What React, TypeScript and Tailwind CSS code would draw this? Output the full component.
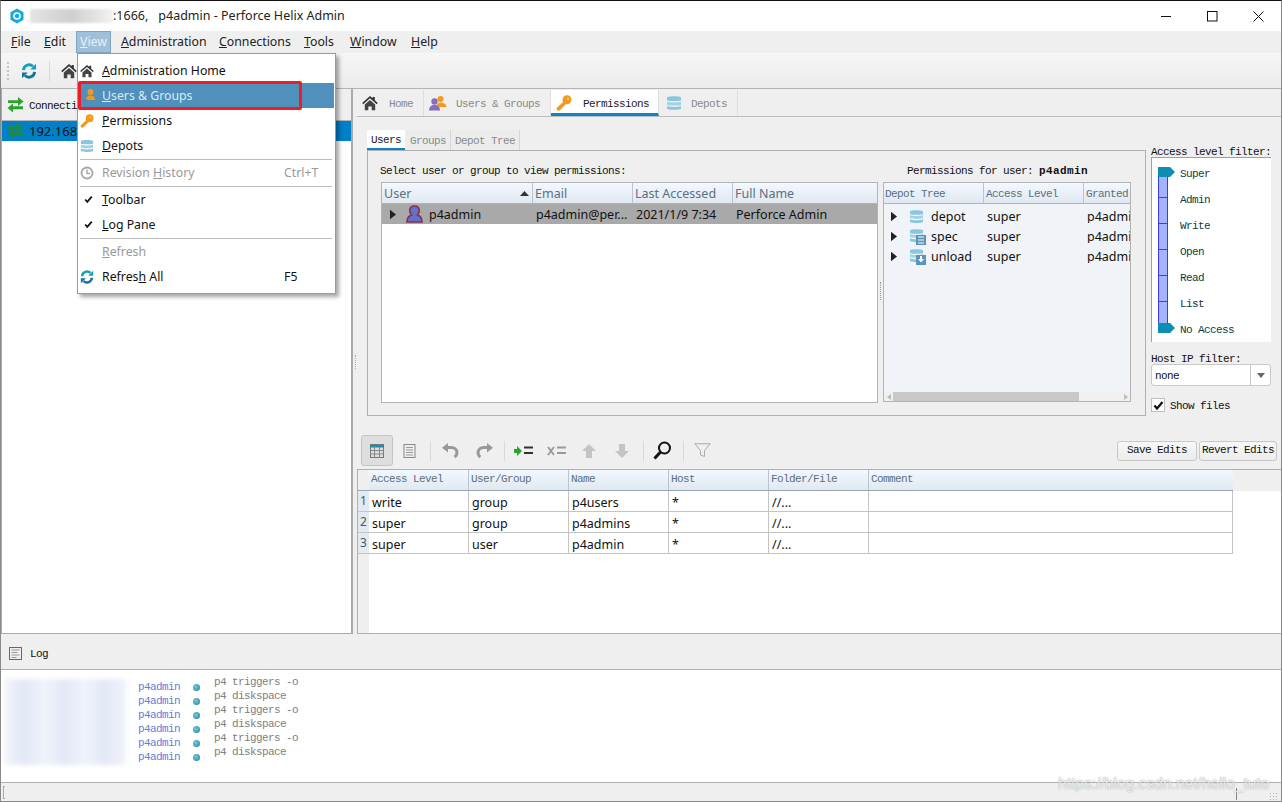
import React from "react";

const mono = "font-['Liberation_Mono',monospace] text-[11px] tracking-[-0.6px] whitespace-pre";

function Home({ s = 16 }: { s?: number }) {
  return (
    <svg width={s} height={s} viewBox="0 0 16 16" className="shrink-0">
      <path d="M8 1 0.2 8l1.100 1.200L8 3.300l6.700 5.900L15.800 8 12.800 5.300V2h-2.200v1.300z" fill="#333" />
      <path d="M2.800 9.600 8 5l5.200 4.600v5.600H9.700v-3.800H6.300v3.800H2.800z" fill="#444" />
    </svg>
  );
}
function Sync({ s = 16 }: { s?: number }) {
  return (
    <svg width={s} height={s} viewBox="0 0 16 16" className="shrink-0" fill="none">
      <path d="M2.400 7.200A5.700 5.700 0 0 1 12 3.400" stroke="#12a0b8" strokeWidth="2.800" />
      <path d="M15 .8v5.700H9.300z" fill="#12a0b8" />
      <path d="M13.600 8.800A5.700 5.700 0 0 1 4 12.600" stroke="#12749c" strokeWidth="2.800" />
      <path d="M1 15.200V9.500h5.700z" fill="#12749c" />
    </svg>
  );
}
function Arrows({ c = "#2aa52a" }: { c?: string }) {
  return (
    <svg width="17" height="16" viewBox="0 0 17 16" className="shrink-0">
      <path d="M1 3.200h10V0l5.500 4.500L11 9V5.900H1z" fill={c} />
      <path d="M16 9.200H6V6.500L.5 11 6 15.500v-3.200h10z" fill={c} />
    </svg>
  );
}
function Key({ s = 16 }: { s?: number }) {
  return (
    <svg width={s} height={s} viewBox="0 0 16 16" className="shrink-0">
      <circle cx="11" cy="4.800" r="4.500" fill="#f39a1c" />
      <path d="M8 6.200 .8 12.800 1 15.500h2.800L10 9z" fill="#f39a1c" />
      <circle cx="12" cy="3.800" r="1" fill="#fcd690" />
    </svg>
  );
}
function Users() {
  return (
    <svg width="18" height="16" viewBox="0 0 18 16" className="shrink-0">
      <circle cx="11.500" cy="4" r="3" fill="#f39a1c" />
      <path d="M7.500 12c0-3 1.500-4.500 4-4.500s6 1.500 6 4.500z" fill="#f39a1c" />
      <circle cx="5.500" cy="6.500" r="3.200" fill="#8a6db8" />
      <path d="M0 15.500c0-3.500 2-5.500 5.500-5.500s5.500 2 5.500 5.500z" fill="#8a6db8" />
    </svg>
  );
}
function MenuUser() {
  return (
    <svg width="13" height="13" viewBox="0 0 13 13" className="shrink-0 ml-[3px]">
      <circle cx="7.500" cy="3" r="3" fill="#f39a1c" />
      <path d="M3 11c0-3 1.500-4.500 4.500-4.500S12 8 12 11z" fill="#f39a1c" />
      <path d="M0 13c0-2 1-3 2.500-3S5 11 5 13z" fill="#7d72b0" />
    </svg>
  );
}
function Depot({ s = 16 }: { s?: number }) {
  return (
    <svg width={s} height={s} viewBox="0 0 16 16" className="shrink-0">
      <path d="M1 2.500C1 .8 15 .8 15 2.500V5C15 6.500 1 6.500 1 5z" fill="#8ac6de" />
      <path d="M1 6.400c3 1.400 11 1.400 14 0V9.400C15 11 1 11 1 9.400z" fill="#a2d2e6" />
      <path d="M1 10.900c3 1.400 11 1.400 14 0V13.500C15 15.300 1 15.300 1 13.500z" fill="#8ac6de" />
    </svg>
  );
}
function Clock() {
  return (
    <svg width="14" height="14" viewBox="0 0 14 14" fill="none" className="shrink-0">
      <circle cx="7" cy="7" r="5.500" stroke="#a8a8a8" strokeWidth="1.800" />
      <path d="M7 3.500V7.500H10" stroke="#a8a8a8" strokeWidth="1.400" />
    </svg>
  );
}
function Check({ s = 11 }: { s?: number }) {
  return (
    <svg width={s} height={s} viewBox="0 0 11 10" fill="none" className="shrink-0">
      <path d="M1.500 5 4 8l5.500-6.500" stroke="#111" strokeWidth="2.200" />
    </svg>
  );
}
function Tri() {
  return (
    <svg width="6" height="11" viewBox="0 0 7 11" className="shrink-0">
      <path d="M0 0l7 5.500L0 11z" fill="#222" />
    </svg>
  );
}
function Person() {
  return (
    <svg width="17" height="18" viewBox="0 0 17 18" className="shrink-0">
      <path d="M1 17c0-4 1.500-6 4.500-7-1-1-1.800-2.400-1.800-4.200C3.700 2.800 5.800 1 8.500 1s4.800 1.800 4.800 4.800c0 1.800-.8 3.200-1.800 4.200 3 1 4.500 3 4.500 7z" fill="#6272c8" stroke="#8a2c50" strokeWidth="1.600" />
    </svg>
  );
}
function SpecOverlay({ down }: { down?: boolean }) {
  return (
    <span className="relative block w-[16px] h-[16px] shrink-0">
      <Depot s={15} />
      <span className="absolute right-[-1px] bottom-[-1px] w-[10px] h-[10px] bg-[#5a94bc] flex items-center justify-center">
        {down ? (
          <svg width="8" height="8" viewBox="0 0 8 8"><path d="M3 0h2v3h2L4 6.500 1 3h2z" fill="#fff" /></svg>
        ) : (
          <svg width="8" height="8" viewBox="0 0 8 8"><path d="M1 1h6M1 4h6M1 7h6" stroke="#fff" /></svg>
        )}
      </span>
    </span>
  );
}

function MenuItem({
  icon, left, u, rest, sc, cls = "text-[#111]",
}: { icon?: React.ReactNode; left?: string; u: string; rest: string; sc?: string; cls?: string }) {
  return (
    <div className={`h-[25px] flex items-center ${cls}`}>
      <span className="w-[24px] flex justify-start pl-[2px] shrink-0">{icon}</span>
      <span className="pt-[2px]">
        {left}
        <u>{u}</u>
        {rest}
      </span>
      {sc && <span className="ml-auto w-[50px] shrink-0 pt-[2px]">{sc}</span>}
    </div>
  );
}

function Sep() {
  return <div className="h-px bg-[#bdbdbd] mx-[2px] my-[0.5px]" />;
}

function Hcell({ w, children, cls = "" }: { w: string; children: React.ReactNode; cls?: string }) {
  return <div className={`${w} ${cls} shrink-0 h-full flex items-center pl-[2px] border-r border-[#b8c4ce] overflow-hidden`}>{children}</div>;
}

function Tab({ w, icon, label, active, pl, gap }: { w: string; icon: React.ReactNode; label: string; active?: boolean; pl: string; gap: string }) {
  return (
    <div className={`${w} ${pl} ${gap} h-[26px] flex items-center border-r border-[#dedede] ${active ? "bg-white border-b-[3px] border-b-[#0a86c8] text-[#222] pt-[3px]" : "text-[#8a8a8a]"}`}>
      {icon}
      <span className={`${mono} pt-[2px]`}>{label}</span>
    </div>
  );
}

const level = ["Super", "Admin", "Write", "Open", "Read", "List", "No Access"];
const perms = [
  ["1", "write", "group", "p4users"],
  ["2", "super", "group", "p4admins"],
  ["3", "super", "user", "p4admin"],
];
const logs = ["p4 triggers -o", "p4 diskspace", "p4 triggers -o", "p4 diskspace", "p4 triggers -o", "p4 diskspace"];

function Thumb() {
  return (
    <svg width="17" height="10" viewBox="0 0 17 10" className="block">
      <path d="M0 0h12l5 5-5 5H0z" fill="#0b8db4" />
    </svg>
  );
}

function DepotRow({ icon, name }: { icon: React.ReactNode; name: string }) {
  return (
    <div className="h-[20px] flex items-center">
      <span className="w-[25px] pl-[7px] shrink-0"><Tri /></span>
      <span className="w-[22px] shrink-0">{icon}</span>
      <span className="w-[55px] shrink-0 pt-[2px]">{name}</span>
      <span className="w-[100px] shrink-0 ml-[1px] pt-[2px]">super</span>
      <span className="overflow-hidden whitespace-nowrap pt-[2px]">p4admin</span>
    </div>
  );
}

export default function App() {
  return (
    <div className="relative w-[1282px] h-[802px] overflow-hidden bg-[#efefef] border-t border-x border-t-[#111] border-x-[#8a8a8a] border-b border-b-[#8a8a8a] flex flex-col text-[12.5px] text-[#111] font-['Noto_Sans','Noto_Sans_CJK_SC',sans-serif] leading-none">
      {/* Title */}
      <div className="h-[30px] shrink-0 bg-white flex items-center pl-[9px]">
        <svg width="14" height="16" viewBox="0 0 14 16" className="shrink-0">
          <path d="M7 .5 13.500 4.200v7.600L7 15.500.5 11.800V4.200z" fill="#12a8e0" />
          <circle cx="7" cy="8" r="3" fill="none" stroke="#fff" strokeWidth="1.600" />
        </svg>
        <div className="ml-[6px] w-[83px] h-[14px] bg-gradient-to-r from-[#e4e4e4] via-[#cfcfcf] to-[#f2f2f2] blur-[1px]" />
        <span className="text-[#222] text-[12.5px]">:1666,</span>
        <span className="text-[#222] text-[12.5px] ml-[10px]">p4admin - Perforce Helix Admin</span>
        <div className="ml-auto flex items-center">
          <svg width="11" height="11" viewBox="0 0 11 11" className="mr-[35px]"><path d="M0 5.500h10" stroke="#111" /></svg>
          <svg width="11" height="11" viewBox="0 0 11 11" className="mr-[35px]"><rect x=".5" y=".5" width="9.500" height="9.500" fill="none" stroke="#111" /></svg>
          <svg width="11" height="11" viewBox="0 0 11 11" className="mr-[17px]"><path d="M.5.5l10 10M10.500.5l-10 10" stroke="#111" /></svg>
        </div>
      </div>
      {/* Menu bar */}
      <div className="h-[22px] shrink-0 flex items-center bg-[#efefef] text-[#222] text-[12.3px]">
        <span className="ml-[10px] w-[33px]"><u>F</u>ile</span>
        <span className="w-[32px]"><u>E</u>dit</span>
        <span className="w-[35px] h-[22px] flex items-center justify-center bg-[#a0c0da] border border-[#7fa5c4] text-[#e6eff6]"><span><u>V</u>iew</span></span>
        <span className="ml-[10px] w-[98px]"><u>A</u>dministration</span>
        <span className="w-[85px]"><u>C</u>onnections</span>
        <span className="w-[46px]"><u>T</u>ools</span>
        <span className="w-[61px]"><u>W</u>indow</span>
        <span><u>H</u>elp</span>
      </div>
      {/* Toolbar */}
      <div className="h-[36px] shrink-0 flex items-center bg-gradient-to-b from-[#f6f6f6] to-[#ececec] border-b border-[#b4b4b4] pl-[6px]">
        <div className="w-[3px] h-[18px] border-l-2 border-dotted border-[#c4c4c4]" />
        <span className="ml-[11px]"><Sync /></span>
        <div className="ml-[12px] w-px h-[20px] bg-[#d8d8d8]" />
        <span className="ml-[11px]"><Home /></span>
      </div>
      {/* Main */}
      <div className="h-[545px] shrink-0 flex">
        {/* Left panel */}
        <div className="w-[352px] shrink-0 flex flex-col border-l border-r-2 border-b border-[#aaaaaa] bg-white">
          <div className="h-[32px] shrink-0 bg-[#efefef] border-b border-[#b4b4b4] flex items-center pl-[5px] gap-[5px]">
            <Arrows />
            <span className={`${mono} pt-[3px]`}>Connections</span>
          </div>
          <div className="h-[20px] shrink-0 bg-[#0080c8] flex items-center pl-[5px] gap-[5px] text-[#111] text-[13px]">
            <Arrows c="#1f8a3c" />
            <span>192.168.1.1:1666</span>
          </div>
        </div>
        {/* Splitter */}
        <div className="w-[4px] shrink-0 flex items-center">
          <div className="w-px h-[14px] border-l border-dotted border-[#aaa] ml-[2px]" />
        </div>
        {/* Right */}
        <div className="flex-1 min-w-0 flex flex-col">
          {/* Tabs */}
          <div className="h-[28px] shrink-0 flex items-end border-b border-[#bcbcbc]">
            <Tab w="w-[67px]" pl="pl-[5px]" gap="gap-[11px]" icon={<Home />} label="Home" />
            <Tab w="w-[127px]" pl="pl-[5px]" gap="gap-[9px]" icon={<Users />} label="Users & Groups" />
            <Tab w="w-[108px]" pl="pl-[5px]" gap="gap-[11px]" icon={<Key />} label="Permissions" active />
            <Tab w="w-[79px]" pl="pl-[7px]" gap="gap-[9px]" icon={<Depot />} label="Depots" />
          </div>
          {/* Upper */}
          <div className="h-[317px] shrink-0 pl-[10px] pt-[13px] pr-[10px] flex gap-[5px]">
            <div className="w-[779px] shrink-0 flex flex-col">
              <div className="h-[21px] flex">
                <div className="w-[38px] h-[20px] pt-[3px] bg-white border-b-2 border-[#0a86c8] flex items-center justify-center text-[#222]"><span className={mono}>Users</span></div>
                <div className="w-[45px] h-[20px] pt-[2px] ml-px bg-[#ececec] border-r border-[#d6d6d6] flex items-center justify-center text-[#8a8a8a]"><span className={mono}>Groups</span></div>
                <div className="w-[69px] h-[20px] pt-[2px] bg-[#ececec] border-r border-[#d6d6d6] flex items-center justify-center text-[#8a8a8a]"><span className={mono}>Depot Tree</span></div>
              </div>
              <div className="w-[779px] h-[266px] -mt-px border border-[#b0b0b0] flex flex-col pl-[13px] pr-[13px]">
                <div className="h-[31px] shrink-0 flex items-center justify-between pr-[44px] pt-[9px]">
                  <span className={`${mono} -ml-[1px]`}>Select user or group to view permissions:</span>
                  <span className={mono}>Permissions for user: <b className="font-bold tracking-[0.4px]">p4admin</b></span>
                </div>
                <div className="flex h-[221px]">
                  {/* Users table */}
                  <div className="w-[497px] shrink-0 border border-[#b4b4b4] bg-white">
                    <div className="h-[21px] flex bg-gradient-to-b from-[#f2f8ff] to-[#e1e8ef] border-b border-[#a8b4be] text-[#5b6f80]">
                      <Hcell w="w-[151px]" cls="relative"><span className="pt-[2px]">User</span>
                        <svg width="9" height="5" viewBox="0 0 9 5" className="absolute right-[3px] top-[8px]"><path d="M0 5 4.500 0 9 5z" fill="#333" /></svg>
                      </Hcell>
                      <Hcell w="w-[100px]"><span className="pt-[2px]">Email</span></Hcell>
                      <Hcell w="w-[100px]"><span className="pt-[2px]">Last Accessed</span></Hcell>
                      <div className="flex-1 pl-[2px] flex items-center"><span className="pt-[2px]">Full Name</span></div>
                    </div>
                    <div className="h-[20px] bg-[#a9a9a9] flex items-center">
                      <span className="w-[24px] pl-[8px] shrink-0"><Tri /></span>
                      <span className="w-[23px] shrink-0"><Person /></span>
                      <span className="w-[107px] shrink-0 pt-[2px]">p4admin</span>
                      <span className="w-[100px] shrink-0 pt-[2px]">p4admin@per...</span>
                      <span className="w-[100px] shrink-0 pt-[2px]">2021/1/9 7:34</span>
                      <span className="pt-[2px]">Perforce Admin</span>
                    </div>
                  </div>
                  <div className="w-[5px] shrink-0 flex items-center justify-center">
                    <div className="h-[18px] border-l border-dotted border-[#999] mt-[-4px]" />
                  </div>
                  {/* Depot table */}
                  <div className="w-[248px] shrink-0 h-[220px] border border-[#b4b4b4] bg-[#f0f4f9] flex flex-col">
                    <div className="h-[21px] shrink-0 flex bg-gradient-to-b from-[#f2f8ff] to-[#e1e8ef] border-b border-[#a8b4be] text-[#5b6f80]">
                      <Hcell w="w-[100px]"><span className={`${mono} pt-[3px] -ml-[1px]`}>Depot Tree</span></Hcell>
                      <Hcell w="w-[100px]"><span className={`${mono} pt-[3px]`}>Access Level</span></Hcell>
                      <div className="flex-1 pl-[2px] flex items-center overflow-hidden"><span className={`${mono} pt-[3px]`}>Granted</span></div>
                    </div>
                    <div className="flex-1 pt-[2px] overflow-hidden">
                      <DepotRow icon={<Depot s={15} />} name="depot" />
                      <DepotRow icon={<SpecOverlay />} name="spec" />
                      <DepotRow icon={<SpecOverlay down />} name="unload" />
                    </div>
                    <div className="h-[9px] shrink-0 bg-[#f0f0f0] flex items-center">
                      <div className="w-[9px] shrink-0 flex justify-center">
                        <svg width="4" height="6" viewBox="0 0 4 6"><path d="M4 0v6L0 3z" fill="#bbb" /></svg>
                      </div>
                      <div className="w-[186px] h-full bg-[#c8c8c8]" />
                      <div className="ml-auto mr-[2px]">
                        <svg width="4" height="6" viewBox="0 0 4 6" className="block"><path d="M0 0v6l4-3z" fill="#bbb" /></svg>
                      </div>
                    </div>
                  </div>
                </div>
              </div>
            </div>
            {/* Filter column */}
            <div className="w-[120px] shrink-0 flex flex-col mt-[15px]">
              <div className={`${mono} h-[12px] flex items-center pt-[2px]`}>Access level filter:</div>
              <div className="h-[185px] bg-white border-l border-t border-[#a0a0a0] relative pt-[9px] pl-[6px]">
                <div className="absolute left-[6px] top-[14px] w-[10px] h-[156px] bg-[#a4b4fc] border-r border-l border-[#3a3af0]" />
                {level.map((l, i) => (
                  <div key={l} className="relative h-[26px] flex items-start">
                    {i === 0 || i === 6 ? (
                      <span className="w-[17px] shrink-0"><Thumb /></span>
                    ) : (
                      <span className="w-[17px] shrink-0 pt-[4px]"><span className="block w-[10px] h-px bg-[#3a3af0]" /></span>
                    )}
                    <span className={`${mono} ml-[5px] mt-[2px] text-[#0a3c46]`}>{l}</span>
                  </div>
                ))}
              </div>
              <div className={`${mono} h-[12px] mt-[10px] flex items-center pt-[2px]`}>Host IP filter:</div>
              <div className="h-[22px] rounded-[3px] border border-[#c8c8c8] bg-white flex items-center">
                <span className={`${mono} pl-[3px] pt-[3px] flex-1`}>none</span>
                <div className="w-[20px] h-full border-l border-[#c8c8c8] flex items-center justify-center">
                  <svg width="8" height="5" viewBox="0 0 8 5"><path d="M0 0h8L4 5z" fill="#666" /></svg>
                </div>
              </div>
              <div className="mt-[12px] flex items-center gap-[5px]">
                <span className="w-[14px] h-[14px] bg-white border border-[#c0c0c0] flex items-center justify-center"><Check /></span>
                <span className={`${mono} pt-[2px]`}>Show files</span>
              </div>
            </div>
          </div>
          {/* Lower toolbar */}
          <div className="h-[35px] shrink-0 flex items-center pl-[4px] pr-[4px] pb-[2px]">
            <div className="w-[32px] h-[31px] bg-[#dedede] border border-[#c4c4c4] rounded-[3px] flex items-center justify-center">
              <svg width="14" height="14" viewBox="0 0 14 14" fill="none">
                <rect x=".5" y=".5" width="13" height="13" stroke="#777" />
                <path d="M0 1h14v2.500H0z" fill="#1a8db0" />
                <path d="M0 6.500h14M0 10h14M4.500 3v11M9.500 3v11" stroke="#888" />
              </svg>
            </div>
            <div className="ml-[10px] w-[14px] flex justify-start">
              <svg width="13" height="14" viewBox="0 0 12 14" fill="none">
                <rect x=".5" y=".5" width="11" height="13" stroke="#888" />
                <path d="M2.500 3.500h7M2.500 6h7M2.500 8.500h7M2.500 11h7" stroke="#999" />
              </svg>
            </div>
            <div className="ml-[13px] w-px h-[20px] bg-[#d8d8d8]" />
            <div className="ml-[11px]">
              <svg width="17" height="15" viewBox="0 0 17 15" fill="none">
                <path d="M5 4.500h4.500a5.500 5.500 0 0 1 5.500 5c0 2-.8 3.500-2.500 4.500" stroke="#999" strokeWidth="3" />
                <path d="M6 0v9.500L0 4.700z" fill="#999" />
              </svg>
            </div>
            <div className="ml-[17px]">
              <svg width="17" height="15" viewBox="0 0 17 15" fill="none">
                <path d="M12 4.500H7.500A5.500 5.500 0 0 0 2 9.500c0 2 .8 3.500 2.500 4.500" stroke="#999" strokeWidth="3" />
                <path d="M11 0v9.500l6-4.800z" fill="#999" />
              </svg>
            </div>
            <div className="ml-[11px] w-px h-[20px] bg-[#d8d8d8]" />
            <div className="ml-[9px]">
              <svg width="19" height="10" viewBox="0 0 19 10"><path d="M0 3h3V0l5 5-5 5V7H0z" fill="#2aa52a" /><path d="M10 1.500h9M10 7h9" stroke="#333" strokeWidth="2" /></svg>
            </div>
            <div className="ml-[14px]">
              <svg width="19" height="10" viewBox="0 0 19 10"><path d="M1 1l6 8M7 1 1 9" stroke="#999" strokeWidth="1.800" /><path d="M10 1.500h9M10 7h9" stroke="#999" strokeWidth="2" /></svg>
            </div>
            <div className="ml-[16px]"><svg width="14" height="14" viewBox="0 0 14 14"><path d="M7 0l7 7H10v7H4V7H0z" fill="#c4c4c4" /></svg></div>
            <div className="ml-[19px]"><svg width="14" height="14" viewBox="0 0 14 14"><path d="M7 14 0 7h4V0h6v7h4z" fill="#c4c4c4" /></svg></div>
            <div className="ml-[14px] w-px h-[20px] bg-[#d8d8d8]" />
            <div className="ml-[9px]">
              <svg width="19" height="19" viewBox="0 0 19 19" fill="none"><circle cx="11.500" cy="7" r="5.500" stroke="#111" strokeWidth="2" /><path d="M7.500 11 1.500 17.500" stroke="#111" strokeWidth="3" /></svg>
            </div>
            <div className="ml-[11px] w-px h-[20px] bg-[#d8d8d8]" />
            <div className="ml-[10px]">
              <svg width="17" height="15" viewBox="0 0 17 15" fill="none"><path d="M.8.800h15.400L10.500 7.500v6l-4-1.500V7.500z" stroke="#aaa" /></svg>
            </div>
            <div className="ml-auto flex gap-[2px]">
              <div className={`${mono} w-[80px] h-[20px] rounded-[3px] border border-[#c8c8c8] bg-gradient-to-b from-[#f8f8f8] to-[#ececec] flex items-center justify-center`}>Save Edits</div>
              <div className={`${mono} w-[78px] h-[20px] rounded-[3px] border border-[#c8c8c8] bg-gradient-to-b from-[#f8f8f8] to-[#ececec] flex items-center justify-center`}>Revert Edits</div>
            </div>
          </div>
          {/* Grid */}
          <div className="flex-1 min-h-0 border-t border-l border-b border-[#b0b0b0] bg-white flex flex-col">
            <div className="h-[21px] shrink-0 flex bg-[#efefef]">
              <div className="w-[875px] flex bg-gradient-to-b from-[#f2f8ff] to-[#e1e8ef] border-b border-[#9aa8b4] text-[#5b6f80]">
                <div className="w-[11px] shrink-0 bg-[#efefef]" />
                {["Access Level", "User/Group", "Name", "Host", "Folder/File"].map((h) => (
                  <Hcell key={h} w="w-[100px]"><span className={`${mono} pb-[1px]`}>{h}</span></Hcell>
                ))}
                <div className="flex-1 pl-[2px] flex items-center"><span className={`${mono} pb-[1px]`}>Comment</span></div>
              </div>
            </div>
            <div className="flex-1 min-h-0 flex">
              <div className="w-[11px] shrink-0 bg-[#efefef] flex flex-col">
                {perms.map((p) => (
                  <div key={p[0]} className="h-[21px] bg-[#e2eaf2] border-b border-[#c4c4c4] flex items-center justify-center text-[#555] text-[12px]">{p[0]}</div>
                ))}
              </div>
              <div className="w-[864px] shrink-0">
                {perms.map((p) => (
                  <div key={p[0]} className="h-[21px] flex border-b border-r border-[#c4c4c4]">
                    {[p[1], p[2], p[3], "*", "//..."].map((c, i) => (
                      <div key={i} className="w-[100px] shrink-0 h-full border-r border-[#c4c4c4] flex items-center pl-[3px] pt-[4px]">{c}</div>
                    ))}
                  </div>
                ))}
              </div>
            </div>
          </div>
        </div>
      </div>
      {/* Log header */}
      <div className="h-[36px] shrink-0 flex items-center border-b border-[#b0b0b0] pl-[8px] gap-[8px] pt-[4px]">
        <svg width="13" height="13" viewBox="0 0 13 13" fill="none">
          <rect x=".5" y=".5" width="12" height="12" stroke="#666" />
          <path d="M2.500 3h8M2.500 5.500h6M2.500 8h8M2.500 10.500h5" stroke="#999" />
        </svg>
        <span className={`${mono} pt-[2px]`}>Log</span>
      </div>
      {/* Log body */}
      <div className="h-[112px] shrink-0 bg-white pt-[9px] pl-[4px] flex">
        <div className="w-[121px] h-[86px] shrink-0 blur-[2px] bg-[repeating-linear-gradient(90deg,#f0f3fa_0px,#e2e8f6_20px,#f0f3fa_40px)]" />
        <div className="ml-[12px] w-[55px] shrink-0 pt-[1px]">
          {logs.map((_, i) => <div key={i} className={`${mono} h-[14px] flex items-center text-[#5f80d8]`}>p4admin</div>)}
        </div>
        <div className="w-[21px] shrink-0 pt-[1px]">
          {logs.map((_, i) => (
            <div key={i} className="h-[14px] flex items-center">
              <span className="block w-[7px] h-[7px] rounded-full bg-[radial-gradient(circle_at_40%_40%,#7cc8dc,#0f7fa8)]" />
            </div>
          ))}
        </div>
        <div className="-mt-[4px]">
          {logs.map((l, i) => <div key={i} className={`${mono} h-[14px] flex items-center text-[#808080]`}>{l}</div>)}
        </div>
      </div>
      {/* Status */}
      <div className="flex-1 min-h-0 border-t border-[#b0b0b0] bg-[#efefef] flex items-center pl-[2px]">
        <div className="w-[2px] h-[13px] border-l border-t border-b border-[#aaa]" />
        <div className="ml-[1231px] w-[10px] h-[12px] mt-[3px] border-l border-[#888]" />
        <div className="ml-auto mr-[3px] mt-[8px] w-[9px] h-[8px] bg-[radial-gradient(#b0b0b0_1px,transparent_1px)] bg-[length:3px_3px]" />
      </div>
      {/* Watermark */}
      <span className="absolute left-[1057px] top-[775px] text-[15.6px] text-[rgba(255,255,255,0.7)] [text-shadow:0_0_1.5px_#999] font-['Liberation_Sans',sans-serif]">https://blog.csdn.net/hello_tute</span>
      {/* View menu */}
      <div className="absolute left-[76px] top-[52px] w-[259px] h-[241px] bg-white border border-[#9a9a9a] shadow-[3px_3px_4px_rgba(0,0,0,0.35)] pt-[4px] pr-px text-[12.3px]">
        <MenuItem icon={<Home s={14} />} u="A" rest="dministration Home" />
        <MenuItem icon={<MenuUser />} u="U" rest="sers & Groups" cls="bg-[#5090bc] text-[#dce8f0]" />
        <MenuItem icon={<Key s={14} />} u="P" rest="ermissions" />
        <MenuItem icon={<Depot s={14} />} u="D" rest="epots" />
        <Sep />
        <MenuItem icon={<Clock />} left="Revision " u="H" rest="istory" sc="Ctrl+T" cls="text-[#999]" />
        <Sep />
        <MenuItem icon={<span className="ml-[4px] block"><Check s={9} /></span>} u="T" rest="oolbar" />
        <MenuItem icon={<span className="ml-[4px] block"><Check s={9} /></span>} u="L" rest="og Pane" />
        <Sep />
        <MenuItem u="R" rest="efresh" cls="text-[#999]" />
        <MenuItem icon={<Sync s={14} />} left="Refres" u="h" rest=" All" sc="F5" />
      </div>
      <div className="absolute left-[77px] top-[80px] w-[224px] h-[29px] border-[3px] border-[#ee1c25] rounded-[2px]" />
    </div>
  );
}
